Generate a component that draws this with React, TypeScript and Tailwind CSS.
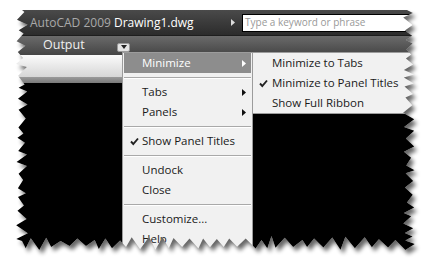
import React from "react";

const font = { fontFamily: "'Open Sans', 'Noto Sans', sans-serif" };

// seeded noise so the torn edge is the same every render
let seed = 11;
const rnd = () => {
  seed = (seed * 16807) % 2147483647;
  return seed / 2147483647;
};

function tornPath() {
  const pts: [number, number][] = [];
  pts.push([22, 10]);
  pts.push([407, 10]);
  // right edge, downwards
  let y = 10;
  let out = true;
  while (y < 244) {
    y += 3 + rnd() * 5;
    pts.push([out ? 411 + rnd() * 4 : 403 + rnd() * 4, Math.min(y, 244)]);
    out = !out;
  }
  // bottom edge, leftwards
  let x = 410;
  out = true;
  while (x > 22) {
    x -= 4 + rnd() * 6;
    pts.push([Math.max(x, 22), out ? 246 + rnd() * 4 : 236 + rnd() * 5]);
    out = !out;
  }
  // left edge, upwards
  y = 244;
  out = true;
  while (y > 14) {
    y -= 3 + rnd() * 6;
    pts.push([out ? 16 + rnd() * 3 : 23 + rnd() * 5, Math.max(y, 12)]);
    out = !out;
  }
  return "M" + pts.map((p) => `${p[0].toFixed(1)} ${p[1].toFixed(1)}`).join("L") + "Z";
}

const TORN = tornPath();

function Arrow({ color }: { color: string }) {
  return (
    <svg width="4" height="7" viewBox="0 0 4 7">
      <path d="M0 0L4 3.5L0 7Z" fill={color} />
    </svg>
  );
}

function Check() {
  return (
    <svg width="9" height="9" viewBox="0 0 9 9">
      <path d="M1 4.5L3.3 7L8 1.5" fill="none" stroke="#222" strokeWidth="1.9" />
    </svg>
  );
}

function Item({ label, sub, checked, active }: { label: string; sub?: boolean; checked?: boolean; active?: boolean }) {
  return (
    <div className={`h-[20px] flex items-center pl-[6px] pr-[5px] mx-px ${active ? "bg-[#8d8d8d] text-white" : "text-[#1a1a1a]"}`}>
      <div className="w-[12px] flex items-center">{checked && <Check />}</div>
      <span className="flex-1 text-[11.5px]">{label}</span>
      {sub && <Arrow color={active ? "#fff" : "#111"} />}
    </div>
  );
}

function Sep() {
  return (
    <div className="h-[9px] flex flex-col justify-center px-px">
      <div className="h-px bg-[#a9a9a9]" />
      <div className="h-px bg-white" />
    </div>
  );
}

export default function App() {
  return (
    <div className="relative w-[432px] h-[266px] bg-white overflow-hidden" style={font}>
      <div className="pt-[10px] flex flex-col h-full">
        {/* title bar */}
        <div className="h-[26px] flex items-center bg-gradient-to-b from-[#4a4a4a] to-[#2c2c2c] border-b border-[#1e1e1e]">
          <div className="pl-[30px] w-[231px] text-[12px] whitespace-nowrap">
            <span className="text-[#a9a9a9]">AutoCAD 2009 </span>
            <span className="text-white">Drawing1.dwg</span>
          </div>
          <Arrow color="#ddd" />
          <div className="ml-[7px] h-[18px] w-[180px] bg-white border border-black flex items-center pl-[2px] text-[10px] text-[#999] whitespace-nowrap">
            Type a keyword or phrase
          </div>
        </div>
        {/* ribbon tab bar */}
        <div className="h-[19px] flex items-center bg-gradient-to-b from-[#6b6b6b] to-[#454545]">
          <span className="pl-[43px] w-[117px] text-[12.5px] text-[#f0f0f0] font-medium">Output</span>
          <div className="mt-[3px] w-[13px] h-[9px] rounded-[2px] bg-[#e4e4e4] border border-[#9a9a9a] flex items-center justify-center">
            <svg width="6" height="4" viewBox="0 0 6 4">
              <path d="M0 0H6L3 4Z" fill="#222" />
            </svg>
          </div>
        </div>
        <div className="h-[22px] bg-gradient-to-b from-[#fbfbfb] to-[#d6d6d6]" />
        <div className="h-[6px] bg-gradient-to-b from-[#9a9a9a] to-[#7a7a7a]" />
        <div className="flex-1 bg-black" />
      </div>

      {/* context menu */}
      <div className="absolute left-[122px] top-[52px] w-[131px] h-[214px] bg-[#f1f1f1] border border-[#9c9c9c]">
        <Item label="Minimize" sub active />
        <Sep />
        <Item label="Tabs" sub />
        <Item label="Panels" sub />
        <Sep />
        <Item label="Show Panel Titles" checked />
        <Sep />
        <Item label="Undock" />
        <Item label="Close" />
        <Sep />
        <Item label="Customize..." />
        <Item label="Help" />
      </div>

      {/* submenu */}
      <div className="absolute left-[252px] top-[52px] w-[175px] h-[62px] bg-[#f1f1f1] border border-[#9c9c9c]">
        <div className="h-[20px] flex items-center pl-[6px]">
          <div className="w-[13px]" />
          <span className="text-[11.5px] text-[#1a1a1a]">Minimize to Tabs</span>
        </div>
        <div className="h-[20px] flex items-center pl-[6px]">
          <div className="w-[13px] flex items-center"><Check /></div>
          <span className="text-[11.5px] text-[#1a1a1a]">Minimize to Panel Titles</span>
        </div>
        <div className="h-[20px] flex items-center pl-[6px]">
          <div className="w-[13px]" />
          <span className="text-[11.5px] text-[#1a1a1a]">Show Full Ribbon</span>
        </div>
      </div>

      {/* torn paper edge with drop shadow */}
      <svg className="absolute inset-0" width="432" height="266" viewBox="0 0 432 266">
        <defs>
          <clipPath id="outside">
            <path d={"M0 0H432V266H0Z" + TORN} clipRule="evenodd" />
          </clipPath>
          <filter id="blur" x="-10%" y="-10%" width="120%" height="120%">
            <feGaussianBlur stdDeviation="2" />
          </filter>
        </defs>
        <path d={"M0 0H432V266H0Z" + TORN} fill="#fff" fillRule="evenodd" />
        <g clipPath="url(#outside)">
          <path d={TORN} transform="translate(3 4)" fill="#000" opacity="0.6" filter="url(#blur)" />
        </g>
      </svg>
    </div>
  );
}
